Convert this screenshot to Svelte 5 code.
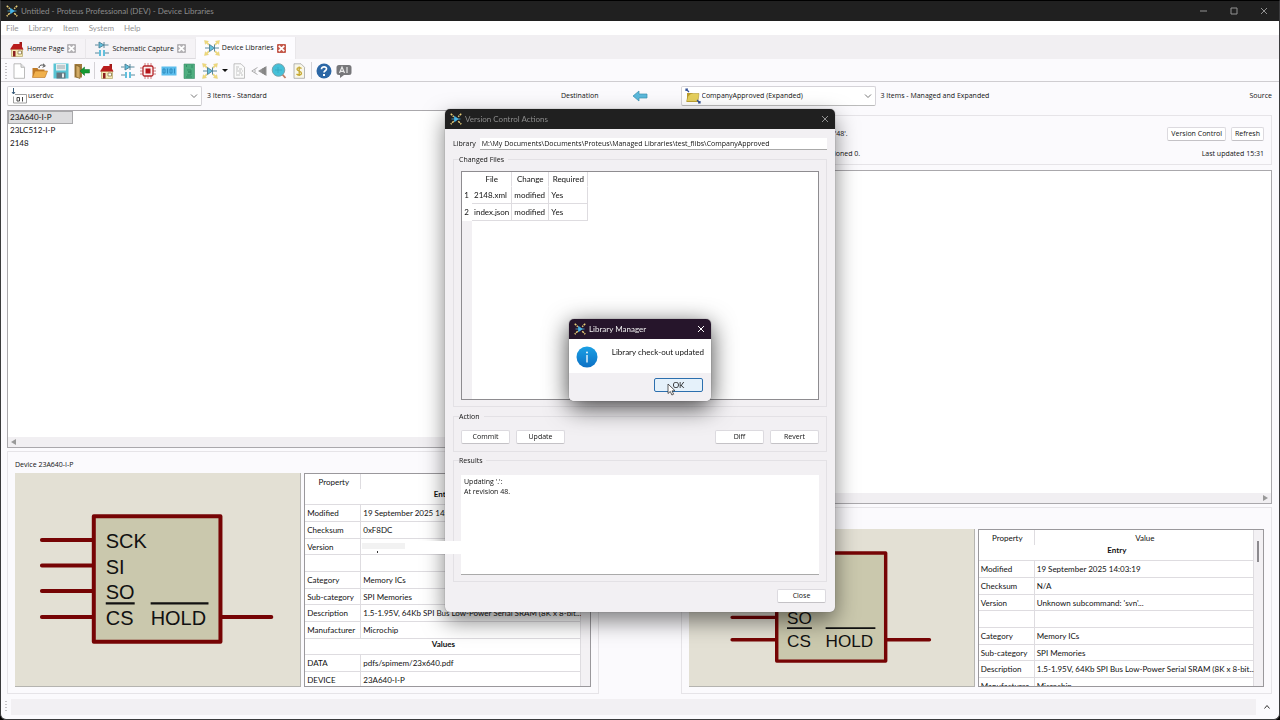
<script>
  const menus = ['File', 'Library', 'Item', 'System', 'Help'];
  const tabs = [
    { label: 'Home Page', icon: 'home', active: false },
    { label: 'Schematic Capture', icon: 'schematic', active: false },
    { label: 'Device Libraries', icon: 'device', active: true }
  ];
  const fileTools = [['new', 'New'], ['open', 'Open'], ['save', 'Save'], ['exit', 'Exit']];
  const moduleTools = [['home', 'Home Page'], ['schematic', 'Schematic Capture'], ['chip', 'PCB Layout'], ['bits', 'Source Code'], ['model', '3D Visualizer'], ['device', 'Device Libraries']];
  const viewTools = [['notes', 'Project Notes'], ['rewind', 'Gerber Viewer'], ['search', 'Design Explorer'], ['bill', 'Bill of Materials']];
  const helpTools = [['help', 'Help'], ['ai', 'Assistant']];
  const devices = ['23A640-I-P', '23LC512-I-P', '2148'];

  const makeRows = (checksum, version) => [
    { heading: 'Entry' },
    { name: 'Modified', value: '19 September 2025 14:03:19' },
    { name: 'Checksum', value: checksum },
    { name: 'Version', value: version },
    { name: '', value: '' },
    { name: 'Category', value: 'Memory ICs' },
    { name: 'Sub-category', value: 'SPI Memories' },
    { name: 'Description', value: '1.5-1.95V, 64Kb SPI Bus Low-Power Serial SRAM (8K x 8-bit...' },
    { name: 'Manufacturer', value: 'Microchip' },
    { heading: 'Values' },
    { name: 'DATA', value: 'pdfs/spimem/23x640.pdf' },
    { name: 'DEVICE', value: '23A640-I-P' }
  ];
  const localRows = makeRows('0xF8DC', null);
  const sourceRows = makeRows('N/A', "Unknown subcommand: 'svn'...");

  const changes = [
    { file: '2148.xml', change: 'modified', required: 'Yes' },
    { file: 'index.json', change: 'modified', required: 'Yes' }
  ];
  let path = $state('M:\\My Documents\\Documents\\Proteus\\Managed Libraries\\test_flibs\\CompanyApproved');
  let results = $state("Updating '.':\nAt revision 48.");
</script>

{#snippet icon(name)}
  <svg class="icon" viewBox="0 0 16 16" aria-hidden="true">
    {#if name === 'home'}
      <path d="M10.5 1h2.5v5h-2.5z" fill="#a01818" />
      <path d="M2.5 8h11v7.5h-11z" fill="#f4e9b4" stroke="#a89858" stroke-width=".6" />
      <path d="M1 8.500 4.500 3h7L14.500 8.500z" fill="#b81c1c" />
      <path d="M4 10h2.500v5.500H4z" fill="#8c2020" />
      <path d="M9 10h3.500v3H9z" fill="#fff" stroke="#806838" stroke-width=".7" />
    {:else if name === 'schematic'}
      <g stroke="#4a7f94" fill="#62bfdc" stroke-width=".9">
        <path d="M1 4h3.500M10 4h4.500M10 1v6M5 1v6l5-3z" />
        <path d="M1 12h5M10 12h5" /><path d="M5 9h2v6H5zM9 9h2v6H9z" stroke="none" />
      </g>
    {:else if name === 'device'}
      <g fill="#f1dc7e" stroke="#dcc568" stroke-width=".4">
        <path d="m.5.5 4 .8-1 1 2 2-1 1-2-2-1.200 1zM15.500.5l-4 .8 1 1-2 2 1 1 2-2 1.200 1zM.5 15.500l4-.8-1-1 2-2-1-1-2 2-1.200-1zM15.500 15.500l-4-.8 1-1-2-2 1-1 2 2 1.200-1z" />
      </g>
      <path d="M1 8h4M10.500 8H15M10.500 4.500v7M5.500 4.500v7l5-3.500z" fill="#62bfdc" stroke="#4a7f94" stroke-width=".9" />
    {:else if name === 'new'}
      <path d="M3 .8h7l3.500 3.500v11H3z" fill="#fff" stroke="#aaa" stroke-width=".8" /><path d="M10 .8v3.500h3.500" fill="#e4e4e4" stroke="#aaa" stroke-width=".8" />
    {:else if name === 'open'}
      <path d="M.5 5h5l1 1.500h6V14H.5z" fill="#c07b28" /><path d="M3 8h12.500L13 14.500H.5z" fill="#f0b04c" stroke="#b8701c" stroke-width=".6" />
      <path d="M7 5c0-3 3-3.500 5-2.500M11 .8l2.300 2-2.700 1.500" fill="none" stroke="#444" stroke-width="1" />
    {:else if name === 'save'}
      <path d="M.5.5h15v15H.5z" fill="#58c4d4" /><path d="M3 1h10v6.500H3z" fill="#e6edef" /><path d="M4 3h8M4 5h8" stroke="#85979c" stroke-width=".8" /><path d="M3.500 9.500h9v6h-9z" fill="#66767f" /><path d="M9 10.500h2v4H9z" fill="#e6edef" />
    {:else if name === 'exit'}
      <path d="M.5 1H8v13.500H.5z" fill="#a07a3c" /><path d="m2 2 4 2v11.500L2 14z" fill="#d2ab66" stroke="#72551f" stroke-width=".6" /><path d="m6 8 4.500-4v2.500h5v3.500h-5v2.500z" fill="#149a32" stroke="#087020" stroke-width=".5" />
    {:else if name === 'chip'}
      <path d="M5 0v16M8 0v16M11 0v16M0 5h16M0 8h16M0 11h16" stroke="#d07c7c" stroke-width="1" /><rect x="3" y="3" width="10" height="10" rx="1.500" fill="#fbeeee" stroke="#b5262b" stroke-width="1.300" /><rect x="5.500" y="5.500" width="5" height="5" fill="#b5161b" />
    {:else if name === 'bits'}
      <rect x=".5" y="3.500" width="15" height="9" fill="#5bbcec" /><path d="M2 6h2v4H2zM6.500 5.500v5M9 6h2v4H9zM13.500 5.500v5" fill="none" stroke="#2f8cc0" stroke-width="1" />
    {:else if name === 'model'}
      <path d="M3 1h10.500v14.500H3z" fill="#4fae80" stroke="#3a8d66" stroke-width=".6" /><path d="m5 2 1 1-1 1m6-2v3M6 7h4v2H7h3v3H6M5 14h6" fill="none" stroke="#2f8560" stroke-width=".8" />
    {:else if name === 'notes'}
      <path d="M3 .8h7l3.500 3.500v11H3z" fill="#fafafa" stroke="#a8a8a8" stroke-width=".7" /><path d="M5 4h3M5 6h2m1 0h3M5 8h5m1 0h1M5 10h1m2 0h3M5 12h4m1 0h2" stroke="#aaa" stroke-width=".7" />
    {:else if name === 'rewind'}
      <path d="M15.500 3v10L7 8z" fill="#929292" /><path d="M12 5v6M13.800 4v8" stroke="#777" stroke-width=".7" /><path d="M6.500 4.500.8 8l5.700 3.500M4 6.500v3" fill="none" stroke="#999" stroke-width=".8" />
    {:else if name === 'search'}
      <path d="m11 11 3.500 4" stroke="#c07b62" stroke-width="1.800" /><circle cx="7.500" cy="7" r="6.300" fill="#45c0d8" stroke="#7a9ea6" stroke-width=".9" /><path d="M4 7h7M7 4v6" stroke="#2998b2" stroke-width=".5" />
    {:else if name === 'bill'}
      <path d="M3 .8h7l3.500 3.500v11H3z" fill="#f8f6e8" stroke="#999" stroke-width=".7" /><path d="M10.500 5.500C9 4 6 4.300 6 6.300S10.500 8 10.500 10.200 7 12.500 5.500 11M8.200 3.500v9.500" fill="none" stroke="#c6a832" stroke-width="1.300" />
    {:else if name === 'help'}
      <circle cx="8" cy="8" r="7.500" fill="#2c67a6" /><path d="M5.500 6.200C5.500 3 10.800 3.300 10.500 6c-.2 1.700-2.500 1.800-2.500 3.500" fill="none" stroke="#fff" stroke-width="1.700" /><path d="M7 11h2v2H7z" fill="#fff" />
    {:else if name === 'ai'}
      <path d="M3 2h10q2.500 0 2.500 2.500v5Q15.500 12 13 12H8l-4 3v-3H3Q.5 12 .5 9.500v-5Q.5 2 3 2z" fill="#77777a" /><path d="m3.500 10 2.500-6 2.500 6M4.300 8.300h3.500M11 4v6" fill="none" stroke="#e8e8e8" stroke-width="1.200" />
    {:else if name === 'library'}
      <path d="M2.500 0v6M1 4l1.500 2L4 4" fill="none" stroke="#375a78" stroke-width="1" /><path d="M4 6.500h11.500v8.500H2.500V8.500" fill="#fff" stroke="#888" stroke-width=".8" /><path d="M6 9.500h2.500v3.500H6zM11.500 9v4.500" fill="none" stroke="#444" stroke-width="1" />
    {:else if name === 'folder'}
      <path d="M2 5h5l1 1h5v8H2z" fill="#b99b2d" /><path d="m3 8 3-2.500h8L13 13.500H1.500z" fill="#e5cf5c" stroke="#a88c25" stroke-width=".5" /><path d="m1 1 3 3M1 3V1h2M15 15l-3-3m3 1v2h-2" stroke="#304f96" stroke-width="1.200" fill="none" />
    {:else if name === 'app'}
      <path d="m1 1 4 4m6 6 4 4m0-14-4 4m-6 6-4 4" stroke="#e9cf79" stroke-width="2" stroke-dasharray="3 1" /><path d="M2 8h4m4 0h4M6 4.500v7L11 8z" fill="#4ab7e8" stroke="#4ab7e8" />
    {/if}
  </svg>
{/snippet}

{#snippet cross()}
  <svg class="cross" viewBox="0 0 10 10" aria-hidden="true"><path d="m2 2 6 6m0-6-6 6" /></svg>
{/snippet}

{#snippet chevron()}
  <svg class="chevron" viewBox="0 0 8 8" aria-hidden="true"><path d="m1 2.500 3 3 3-3" /></svg>
{/snippet}

{#snippet symbol()}
  <div class="canvas">
    <svg viewBox="1 1 286 183" role="img" aria-label="Device symbol">
      <g stroke="#760404" stroke-width="4" stroke-linecap="round" stroke-linejoin="round">
        <path d="M28 53h51M28 78.500h51M28 104h51M28 130h51M207 130h51" />
        <rect x="80" y="29" width="127" height="126" fill="#cac8ad" />
      </g>
      <path d="M92 116.500h29M137 116.500h58" stroke="#111" stroke-width="2.200" />
      <g class="pin-names">
        <text x="92" y="61">SCK</text><text x="92" y="87">SI</text><text x="92" y="112">SO</text>
        <text x="92" y="138">CS</text><text x="137" y="138">HOLD</text>
      </g>
    </svg>
  </div>
{/snippet}

{#snippet properties(rows)}
  <div class="prop-frame">
    <table class="props">
      <thead><tr><th>Property</th><th>Value</th></tr></thead>
      <tbody>
        {#each rows as row}
          {#if row.heading}
            <tr class="heading"><th colspan="2">{row.heading}</th></tr>
          {:else}
            <tr>
              <td>{row.name}</td>
              <td>{#if row.value === null}<span class="repaint"><i></i><b></b></span>{:else}{row.value}{/if}</td>
            </tr>
          {/if}
        {/each}
      </tbody>
    </table>
    <div class="track"><span></span></div>
  </div>
{/snippet}

<div class="window">
  <header class="titlebar">
    {@render icon('app')}
    <h1>Untitled - Proteus Professional (DEV) - Device Libraries</h1>
    <div class="controls">
      <button aria-label="Minimize"><svg viewBox="0 0 10 10"><path d="M1 5h7" /></svg></button>
      <button aria-label="Maximize"><svg viewBox="0 0 10 10"><path d="M2 2h6v6H2z" /></svg></button>
      <button aria-label="Close">{@render cross()}</button>
    </div>
  </header>
  <nav class="menu">{#each menus as m}<button>{m}</button>{/each}</nav>
  <div class="tabs">
    {#each tabs as t}
      <div class="tab" class:active={t.active}>
        {@render icon(t.icon)}<button class="tab-name">{t.label}</button>
        <button class="tab-close" aria-label={`Close ${t.label}`}>{@render cross()}</button>
      </div>
    {/each}
  </div>
  <div class="toolbar">
    <span class="grip"></span>
    <div class="tools wide">{#each fileTools as [n, l]}<button aria-label={l}>{@render icon(n)}</button>{/each}</div>
    <span class="sep"></span>
    <div class="tools modules">{#each moduleTools as [n, l]}<button aria-label={l}>{@render icon(n)}</button>{/each}</div>
    <button class="caret" aria-label="More"></button>
    <div class="tools">{#each viewTools as [n, l]}<button aria-label={l}>{@render icon(n)}</button>{/each}</div>
    <span class="sep"></span>
    <div class="tools">{#each helpTools as [n, l]}<button aria-label={l}>{@render icon(n)}</button>{/each}</div>
  </div>

  <main>
    <section class="side">
      <div class="picker">
        <div class="combo">{@render icon('library')}<select aria-label="Destination library"><option>userdvc</option></select>{@render chevron()}</div>
        <span>3 Items - Standard</span><span class="end">Destination</span>
      </div>
      <div class="list">
        <ul>{#each devices as d, i}<li class:selected={i === 0}>{d}</li>{/each}</ul>
        <div class="hscroll"><svg viewBox="0 0 8 8"><path d="M6 1v6L1 4z" /></svg></div>
      </div>
      <div class="group detail">
        <h2>Device 23A640-I-P</h2>
        <div class="viewer tall">{@render symbol()}{@render properties(localRows)}</div>
      </div>
    </section>

    <div class="transfer">
      <button aria-label="Copy to destination"><svg viewBox="0 0 16 12"><path d="M1 6 7 1v3h8v4H7v3z" fill="#5bb9dc" stroke="#3c8fae" stroke-width=".7" /></svg></button>
    </div>

    <section class="side">
      <div class="picker">
        <div class="combo">{@render icon('folder')}<select aria-label="Source library"><option>CompanyApproved (Expanded)</option></select>{@render chevron()}</div>
        <span>3 Items - Managed and Expanded</span><span class="end">Source</span>
      </div>
      <div class="group status-box">
        <div class="status-row"><span>Library is version controlled at head revision '48'.</span><div class="pair"><button class="btn">Version Control</button><button class="btn">Refresh</button></div></div>
        <div class="status-row"><span>Local: modified 0, added 0, deleted 0, unversioned 0.</span><span>Last updated 15:31</span></div>
      </div>
      <div class="list">
        <div class="hscroll right"><svg viewBox="0 0 8 8"><path d="M2 1v6l5-3z" /></svg></div>
      </div>
      <div class="group detail">
        <h2>Device 23A640-I-P</h2>
        <div class="viewer">{@render symbol()}{@render properties(sourceRows)}</div>
      </div>
    </section>
  </main>

  <footer><span class="grip"></span><div class="statusbar"></div><button aria-label="Expand"><svg viewBox="0 0 8 8"><path d="m1.500 5.500 2.500-3 2.500 3" /></svg></button></footer>
</div>

<div class="overlay">
  <div class="dialog" role="dialog" aria-labelledby="vc-title">
    <header class="titlebar">{@render icon('app')}<h2 id="vc-title">Version Control Actions</h2><div class="controls"><button aria-label="Close">{@render cross()}</button></div></header>
    <div class="dialog-body">
      <div class="field"><label for="lib-path">Library</label><input id="lib-path" bind:value={path} /></div>
      <fieldset>
        <legend>Changed Files</legend>
        <div class="files">
          <div class="rowtrack">
            <table>
              <thead><tr><th></th><th>File</th><th>Change</th><th>Required</th></tr></thead>
              <tbody>{#each changes as c, i}<tr><th>{i + 1}</th><td>{c.file}</td><td>{c.change}</td><td>{c.required}</td></tr>{/each}</tbody>
            </table>
          </div>
        </div>
      </fieldset>
      <fieldset class="action">
        <legend>Action</legend>
        <div class="buttons"><button class="btn wide">Commit</button><button class="btn wide">Update</button><span></span><button class="btn wide">Diff</button><button class="btn wide">Revert</button></div>
      </fieldset>
      <fieldset class="results">
        <legend>Results</legend>
        <textarea aria-label="Results" bind:value={results}></textarea>
      </fieldset>
      <div class="close-row"><button class="btn wide">Close</button></div>
    </div>
  </div>
</div>

<div class="overlay top">
  <div class="message" role="alertdialog" aria-labelledby="msg-title">
    <header class="titlebar">{@render icon('app')}<h2 id="msg-title">Library Manager</h2><div class="controls"><button aria-label="Close">{@render cross()}</button></div></header>
    <div class="message-body">
      <svg viewBox="0 0 22 22" aria-hidden="true"><defs><linearGradient id="blue" x2="0" y2="1"><stop stop-color="#1ba0e4" /><stop offset="1" stop-color="#0c70c4" /></linearGradient></defs><circle cx="11" cy="11" r="10.500" fill="url(#blue)" /><path d="M11 9v7.500" stroke="#fff" stroke-width="1.300" /><circle cx="11" cy="6.500" r=".9" fill="#fff" /></svg>
      <p>Library check-out updated</p>
    </div>
    <div class="message-foot">
      <button class="btn wide primary">OK
        <svg class="pointer" viewBox="0 0 9 13" aria-hidden="true"><path d="M1 1v9.500l2.300-2 1.600 3.500 1.700-.8L5 7.900l3-.2z" fill="#fff" stroke="#333" stroke-width=".8" /></svg>
      </button>
    </div>
  </div>
</div>

<style>
  :global(body) { background: #000; }
  :global(*) { box-sizing: border-box; }
  .window, .overlay { font: 7px/10px "Open Sans", "Noto Sans", sans-serif; color: #111; }
  button, select, input, textarea { font: inherit; color: inherit; padding: 0; margin: 0; border: 0; background: none; }
  h1, h2, p, ul { margin: 0; padding: 0; font: inherit; list-style: none; }
  button { display: inline-flex; align-items: center; justify-content: center; }
  .titlebar, .menu, .list, .props, .files, .message { font-family: Lato, "Open Sans", sans-serif; font-size: 8px; }
  .icon { width: 16px; height: 16px; flex: none; display: block; }
  .cross { width: 10px; height: 10px; fill: none; stroke: currentColor; }
  table { border-collapse: separate; border-spacing: 0; }

  .window { min-height: 100vh; display: flex; flex-direction: column; background: #fbfafd; border: 1px solid #3a3a3c; border-top-color: #000; border-radius: 0 0 6px 6px; overflow: hidden; }
  .titlebar { display: flex; align-items: center; gap: 3px; height: 20px; padding-left: 5px; background: #202020; color: #8c8c8c; flex: none; }
  .titlebar .icon { width: 12px; height: 12px; }
  .controls { margin-left: auto; display: flex; }
  .controls button { width: 30px; height: 20px; color: #929292; }
  .controls svg { width: 10px; height: 10px; fill: none; stroke: currentColor; stroke-width: 1; }
  .menu { display: flex; gap: 10px; height: 14px; padding-left: 5px; background: #fff; color: #949494; }
  .tabs { display: flex; align-items: flex-end; height: 24px; background: #f1eff2; }
  .tab { display: flex; align-items: center; height: 20px; padding: 0 9px 0 8px; gap: 2px; border-right: 1px solid #e9e7ea; background: #f5f3f6; border-bottom: 1px solid #dddbdf; }
  .tab.active { height: 22px; background: #fdfcff; border-bottom: 0; }
  .tab-close { width: 9px; height: 9px; margin-left: 1px; border-radius: 1px; background: #b5b3b6; color: #fff; }
  .tab-close .cross { stroke-width: 2; width: 9px; height: 9px; }
  .active .tab-close { background: #c45a4c; }
  .toolbar { display: flex; align-items: center; height: 23px; padding: 1px 0 0 4px; border-bottom: 1px solid #cfcdd1; }
  .grip { width: 2px; height: 16px; background: repeating-linear-gradient(#c4c2c6 0 1px, transparent 1px 3px); flex: none; }
  .tools { display: flex; gap: 4px; }
  .tools.wide { gap: 5px; margin-left: 4px; }
  .tools.modules { width: 119px; justify-content: space-between; }
  .sep { width: 1px; height: 17px; margin: 0 4px; background: #d4d2d6; }
  .caret { width: 13px; height: 16px; }
  .caret::after { content: ""; border: 3px solid transparent; border-top-color: #111; border-bottom: 0; }

  main { flex: 1; display: grid; grid-template-columns: minmax(0, 1fr) 82px minmax(0, 1fr); padding: 0 7px 0 6px; }
  .side { display: flex; flex-direction: column; min-width: 0; }
  .picker { display: flex; align-items: center; gap: 5px; height: 28px; flex: none; }
  .picker .end { margin-left: auto; }
  .combo { display: flex; align-items: center; width: 195px; height: 20px; padding: 0 3px; gap: 1px; border: 1px solid #d5d3d8; border-bottom-color: #bbb; border-radius: 2px; background: #fff; }
  .combo select { flex: 1; appearance: none; outline: 0; }
  .chevron { width: 8px; height: 8px; fill: none; stroke: #777; }
  .list { flex: 1; display: flex; flex-direction: column; justify-content: space-between; border: 1px solid #aaa8ac; background: #fff; }
  .list li { height: 13px; padding: 0 2px; line-height: 13px; }
  .list li.selected { width: 65px; background: #dcdcde; border: 1px solid #a8a8aa; line-height: 11px; padding: 0 1px; }
  .hscroll { display: flex; align-items: center; margin-top: auto; height: 10px; padding: 0 2px; background: #f1eff2; }
  .hscroll svg { width: 8px; height: 8px; fill: #999; }
  .hscroll.right { justify-content: flex-end; }
  .group { border: 1px solid #e6e4e8; }
  .detail { margin-top: 3px; padding: 7px 7px 6px; }
  .detail h2 { height: 14px; line-height: 11px; }
  .viewer { display: grid; grid-template-columns: 1fr 1fr; gap: 3px; height: 158px; }
  .viewer.tall { height: 214px; }
  .canvas { background: #e3e0d4; border: solid #b5b4b0; border-width: 0 1px 1px 0; min-height: 0; }
  .canvas svg { display: block; width: 100%; height: 100%; }
  .pin-names { font: 20px "Liberation Sans", sans-serif; fill: #111; }
  .prop-frame { display: flex; border: 1px solid #9a989c; background: #fff; overflow: hidden; min-height: 0; }
  .props { flex: 1; table-layout: fixed; width: 100%; align-self: flex-start; }
  .props td, .props th { height: 17px; padding: 0 0 0 2px; border: solid #dedce0; border-width: 0 1px 1px 0; font-weight: 400; white-space: nowrap; line-height: 10px; }
  .props tbody tr:nth-child(3n + 1) > * { height: 16px; }
  .props thead th { height: 15px; border-bottom: 0; }
  .props th:first-child, .props td:first-child { width: 56px; }
  .props .heading th:first-child { font-weight: 700; vertical-align: top; line-height: 11px; }
  .track { width: 9px; flex: none; background: #f3f1f4; padding: 11px 3px; }
  .track span { display: block; width: 2px; height: 21px; background: #8c8a8e; }
  .repaint { position: absolute; z-index: 30; width: 100px; height: 13px; margin: -6px 0 0 -2px; background: #fff; }
  .repaint i { display: block; width: 43px; height: 6px; margin: 2px 0 0 1px; background: #f2f2f2; }
  .repaint b { display: block; width: 1px; height: 2px; margin: 2px 0 0 16px; background: #333; }
  .transfer { display: flex; justify-content: center; height: 28px; align-items: center; }
  .transfer svg { width: 16px; height: 12px; display: block; }
  .status-box { margin: 5px 0; height: 50px; padding: 11px 7px 5px; display: flex; flex-direction: column; justify-content: space-between; }
  .status-row { display: flex; justify-content: space-between; align-items: center; }
  .pair { display: flex; gap: 5px; }
  .btn { height: 14px; padding: 0 3px; background: #fff; border: 1px solid #dcdadf; border-bottom-color: #c4c2c6; border-radius: 2px; }
  .btn.wide { width: 49px; }
  footer { display: flex; align-items: center; height: 16px; margin: 5px 0 4px; padding: 0 5px 0 4px; gap: 4px; }
  footer .grip { height: 12px; }
  .statusbar { flex: 1; height: 16px; background: #f2f0f3; }
  footer svg { width: 8px; height: 8px; fill: none; stroke: #333; }
  footer button { width: 14px; }

  .overlay { position: fixed; inset: 0; z-index: 10; display: grid; place-items: center; }
  .overlay.top { z-index: 20; }
  .dialog { width: 390px; border-radius: 5px; background: #f2f0f3; box-shadow: 0 0 1px #555, 0 9px 22px rgba(0, 0, 0, .5); overflow: hidden; }
  .dialog-body { padding: 9px 8px; }
  .field { display: flex; align-items: center; gap: 4px; height: 12px; }
  .field input { flex: 1; height: 12px; padding: 0 2px; background: #fff; border-bottom: 1px solid #aaa; }
  fieldset { margin: 5px 0 0; padding: 6px 7px; border: 1px solid #e3e1e5; }
  fieldset.action { padding: 8px 7px 7px; }
  fieldset.results { margin-top: 4px; padding: 9px 7px 6px; }
  legend { padding: 0 4px 0 0; margin-left: -2px; height: 10px; }
  .files { height: 229px; border: 1px solid #8e8c90; background: #fff; }
  .rowtrack { height: 100%; background: linear-gradient(90deg, #f2f0f3 10px, #fff 10px); }
  .files td, .files th { height: 17px; padding: 0 2px; font-weight: 400; border: solid #dedce0; border-width: 0 1px 1px 0; background: #fff; }
  .files thead th { border-bottom-color: transparent; height: 15px; }
  .files th:first-child { width: 10px; border-color: transparent; }
  .files th:nth-child(2) { width: 40px; }
  .files th:nth-child(3) { width: 37px; }
  .files th:nth-child(4) { width: 39px; }
  .buttons { display: flex; gap: 6px; }
  .buttons span { flex: 1; }
  textarea { display: block; width: 100%; height: 100px; padding: 2px 3px; resize: none; background: #fff; border-bottom: 1px solid #aaa; outline: 0; }
  .close-row { display: flex; justify-content: flex-end; margin-top: 7px; padding-right: 1px; }

  .message { width: 142px; border-radius: 5px; background: #fff; overflow: hidden; box-shadow: 0 0 1px #444, 0 6px 24px rgba(0, 0, 0, .75); }
  .message .titlebar { background: #26152b; color: #f0f0f0; }
  .message .titlebar .controls button { width: 20px; color: #fff; }
  .dialog .controls button { width: 20px; }
  .message-body { display: flex; justify-content: space-between; padding: 7px; height: 34px; line-height: 12px; }
  .message-body svg { width: 22px; height: 22px; }
  .message-foot { display: flex; justify-content: flex-end; padding: 5px 8px 8px; height: 28px; background: #f2f0f3; }
  .primary { position: relative; background: #e5f1fa; border-color: #2c6fae; }
  .pointer { position: absolute; left: 12px; top: 4px; width: 9px; height: 13px; }
</style>
